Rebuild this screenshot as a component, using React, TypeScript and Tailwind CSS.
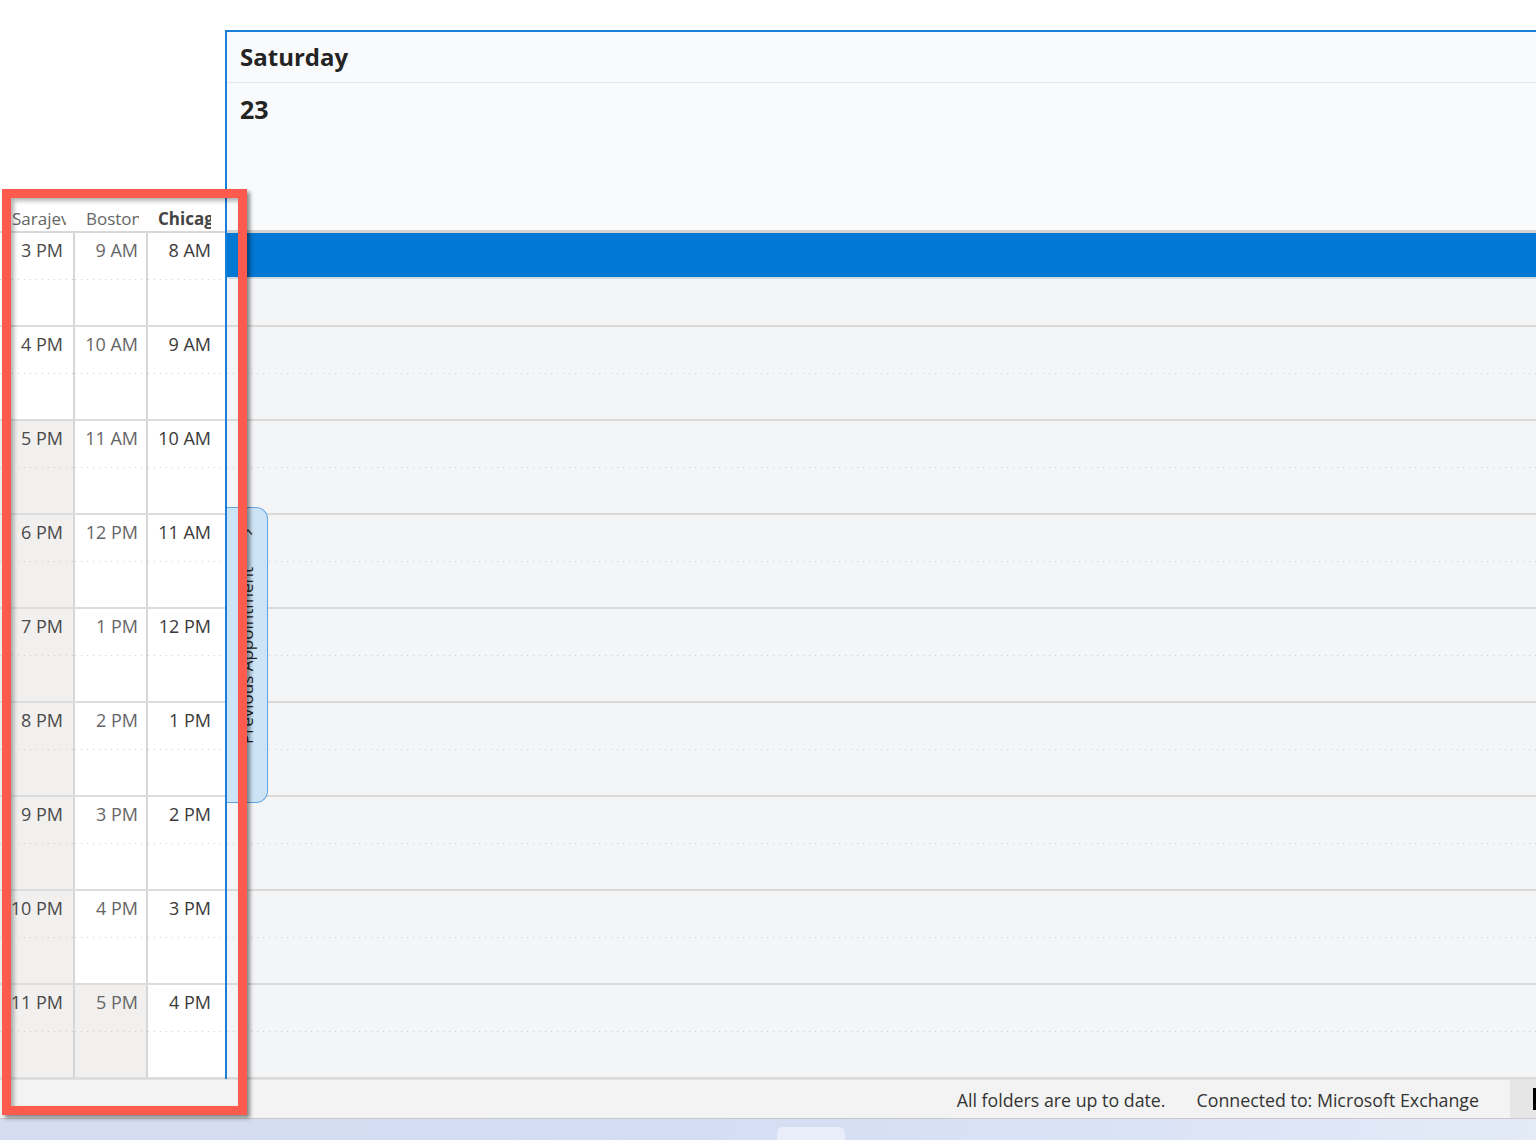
const ROWS = [
  ['3 PM', '9 AM', '8 AM'],
  ['4 PM', '10 AM', '9 AM'],
  ['5 PM', '11 AM', '10 AM'],
  ['6 PM', '12 PM', '11 AM'],
  ['7 PM', '1 PM', '12 PM'],
  ['8 PM', '2 PM', '1 PM'],
  ['9 PM', '3 PM', '2 PM'],
  ['10 PM', '4 PM', '3 PM'],
  ['11 PM', '5 PM', '4 PM'],
]

const dots = 'h-px shrink-0 bg-[linear-gradient(to_right,#cdcdcd_1px,transparent_1px)] bg-[length:6px_1px]'

function TimeCell({ label, off, pad, color }: { label: string; off: boolean; pad: string; color: string }) {
  return (
    <div className={`flex-1 flex flex-col ${off ? 'bg-[#f1f0ef]' : 'bg-white'}`}>
      <div className={`h-[46px] pt-[5px] text-right text-[18px] leading-[24px] ${pad} ${color}`}>{label}</div>
      <div className={dots} />
      <div className="flex-1" />
    </div>
  )
}

function TimeScale() {
  return (
    <div className="w-[225px] shrink-0 flex flex-col bg-white">
      <div className="h-[201px]" />
      {/* zone headers */}
      <div className="h-[32px] flex border-b-2 border-[#d9d9d9] pt-[6px] text-[17px] leading-[23px]">
        <div className="w-[75px] pl-[12px]">
          <div className="w-[54px] overflow-hidden whitespace-nowrap text-[#666]">Sarajevo</div>
        </div>
        <div className="w-[73px] pl-[11px]">
          <div className="w-[53px] overflow-hidden whitespace-nowrap text-[#666]">Boston</div>
        </div>
        <div className="flex-1 pl-[10px]">
          <div className="w-[53px] overflow-hidden whitespace-nowrap font-bold text-[#444]">Chicago</div>
        </div>
      </div>
      {ROWS.map((r, i) => (
        <div key={i} className="h-[94px] flex border-b-2 border-[#dcdcdc]">
          <div className="w-[75px] flex border-r-2 border-[#d6d6d6]">
            <TimeCell label={r[0]} off={i >= 2} pad="pr-[10px]" color="text-[#4a4a4a]" />
          </div>
          <div className="w-[73px] flex border-r-2 border-[#d6d6d6]">
            <TimeCell label={r[1]} off={i >= 8} pad="pr-[8px]" color="text-[#666]" />
          </div>
          <TimeCell label={r[2]} off={false} pad="pr-[14px]" color="text-[#3a3a3a]" />
        </div>
      ))}
    </div>
  )
}

function DayView() {
  return (
    <div className="relative flex-1 mt-[30px] flex flex-col border-t-2 border-l-2 border-[#1a7fd9]">
      {/* day header */}
      <div className="h-[201px] shrink-0 bg-[#f9fafc] border-b-[3px] border-[#d3d3d3] text-[#242424]">
        <div className="h-[51px] flex items-center pl-[13px] border-b border-[#e6e6e6] text-[24px] font-bold">
          Saturday
        </div>
        <div className="pl-[13px] pt-[10px] text-[25px] leading-[32px] font-bold">23</div>
      </div>
      {/* hour slots */}
      {ROWS.map((_, i) => (
        <div key={i} className="h-[94px] shrink-0 flex flex-col bg-[#f4f5f7] border-b-2 border-[#dadada]">
          {i === 0 ? (
            <div className="h-[46px] bg-[#0078d4] border-b-2 border-[#d2dae4]" />
          ) : (
            <>
              <div className="h-[46px]" />
              <div className={dots} />
            </>
          )}
          <div className="flex-1" />
        </div>
      ))}

      {/* previous appointment tab */}
      <div className="absolute left-0 top-[475px] w-[41px] h-[296px] flex items-center justify-center bg-[#cde4f7] border border-l-0 border-[#5ea5e4] rounded-r-[12px]">
        <svg className="absolute top-[20px] left-[16px]" width="10" height="8" viewBox="0 0 10 8">
          <path d="M1 6.5 L5 2 L9 6.5" fill="none" stroke="#333" strokeWidth="1.3" />
        </svg>
        <span className="[writing-mode:vertical-rl] rotate-180 text-[17px] leading-[22px] text-[#222] whitespace-nowrap">
          Previous Appointment
        </span>
      </div>
    </div>
  )
}

export default function App() {
  return (
    <div className="relative w-[1536px] h-[1140px] overflow-hidden bg-white flex flex-col font-['Segoe_UI','Open_Sans',sans-serif]">
      <div className="h-[1079px] shrink-0 flex">
        <TimeScale />
        <DayView />
      </div>

      {/* status bar */}
      <div className="h-[40px] shrink-0 flex justify-end items-stretch bg-[#f3f3f3] border-t border-b border-t-[#e0e0e0] border-b-[#c8c8c8] text-[17.8px] text-[#333]">
        <span className="flex items-center pt-[3px]">All folders are up to date.</span>
        <span className="flex items-center pt-[3px] ml-[31px]">Connected to: Microsoft Exchange</span>
        <div className="ml-[31px] w-[26px] flex items-center justify-end bg-[#e6e6e6]">
          <div className="w-[3px] h-[22px] bg-black" />
        </div>
      </div>

      {/* desktop strip */}
      <div className="flex-1 bg-[linear-gradient(to_right,#d6dcf1,#d3def4_45%,#dbe3f6_75%,#e4ebf7)]">
        <div className="ml-[777px] mt-[8px] w-[68px] h-[14px] rounded-t-[6px] bg-[#e9edf9]" />
      </div>

      {/* annotation */}
      <div className="pointer-events-none absolute left-[2px] top-[189px] w-[245px] h-[926px] border-[9px] border-[#fe5a4e] shadow-[3px_3px_4px_rgba(0,0,0,0.45),inset_3px_3px_4px_rgba(0,0,0,0.3)]" />
    </div>
  )
}
